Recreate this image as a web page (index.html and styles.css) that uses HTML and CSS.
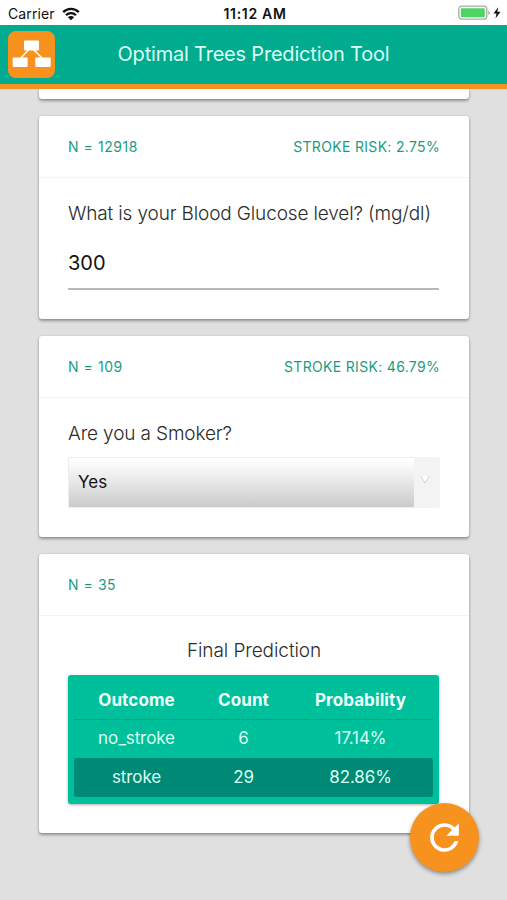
FILE: index.html
```
<!DOCTYPE html>
<html lang="en">
<head>
<meta charset="utf-8">
<title>Optimal Trees Prediction Tool</title>
<link rel="stylesheet" href="styles.css">
</head>
<body>
<div class="statusbar">
  <div class="carrier">
    <span>Carrier</span>
    <svg class="wifi" width="18" height="14" viewBox="0 0 18 14"><g fill="none" stroke="#111" stroke-width="2.3"><path d="M1.2 5.1a11 11 0 0 1 15.6 0"/><path d="M4 8.2a7 7 0 0 1 10 0"/></g><path d="M5.9 10.3a4.4 4.4 0 0 1 6.2 0L9 13.3z" fill="#111"/></svg>
  </div>
  <div class="clock">11:12 AM</div>
  <svg class="battery" width="44" height="16" viewBox="0 0 44 16"><rect x=".8" y="1.2" width="28" height="13" rx="3" fill="#fff" stroke="#aaa" stroke-width="1.3"/><rect x="2.8" y="3.2" width="24" height="9" rx="1" fill="#4cd561"/><path d="M30.3 5.4q1.6.6 1.6 2.3t-1.6 2.3z" fill="#aaa"/><path d="M40.2 2.2l-4.7 6.4h3l-1 4.9 5-6.7h-3.2z" fill="#111"/></svg>
</div>
<header class="header">
  <svg class="logo" width="47" height="47" viewBox="0 0 47 47"><rect width="47" height="47" rx="8" fill="#f7921e"/><path d="M12 28l11-12 12 12" fill="none" stroke="#fff" stroke-width="1.5"/><g fill="#fff"><rect x="16" y="9.5" width="15" height="10" rx="1"/><rect x="4.7" y="26.5" width="15" height="9.5" rx="1"/><rect x="27.3" y="26.5" width="15.4" height="9.5" rx="1"/></g></svg>
  <h1 class="title">Optimal Trees Prediction Tool</h1>
</header>
<main class="cards">
  <section class="card card-tail"></section>
  <section class="card card-glucose">
    <div class="card-head"><span class="count">N = 12918</span><span class="risk">STROKE RISK: 2.75%</span></div>
    <div class="card-body">
      <div class="question">What is your Blood Glucose level? (mg/dl)</div>
      <div class="field">300</div>
    </div>
  </section>
  <section class="card card-smoker">
    <div class="card-head"><span class="count">N = 109</span><span class="risk">STROKE RISK: 46.79%</span></div>
    <div class="card-body">
      <div class="question">Are you a Smoker?</div>
      <div class="select"><div class="select-value">Yes</div><div class="select-arrow"><svg width="10" height="10" viewBox="0 0 10 10"><path d="M1 1.2L5 8l4-6.8" fill="#fff" stroke="#d4d4d4"/></svg></div></div>
    </div>
  </section>
  <section class="card card-result">
    <div class="card-head"><span class="count">N = 35</span></div>
    <div class="card-body">
      <div class="question final">Final Prediction</div>
      <div class="result">
        <div class="row row-head"><span>Outcome</span><span>Count</span><span>Probability</span></div>
        <div class="row"><span>no_stroke</span><span>6</span><span>17.14%</span></div>
        <div class="row row-active"><span>stroke</span><span>29</span><span>82.86%</span></div>
      </div>
    </div>
  </section>
</main>
<div class="fab"><svg width="43" height="43" viewBox="0 0 24 24"><path fill="#fff" d="M17.65 6.35A7.96 7.96 0 0 0 12 4a8 8 0 1 0 7.73 10h-2.08A6 6 0 1 1 12 6c1.66 0 3.14.69 4.22 1.78L13 11h7V4z"/></svg></div>
</body>
</html>
```
FILE: styles.css
```
* { box-sizing: border-box; }
body {
  margin: 0;
  width: 507px;
  height: 900px;
  overflow: hidden;
  background: #e0e0e0;
  font-family: Inter, "Liberation Sans", sans-serif;
  display: flex;
  flex-direction: column;
}
.statusbar {
  height: 25px;
  flex: none;
  background: #fff;
  display: grid;
  grid-template-columns: 1fr auto 1fr;
  align-items: center;
  padding: 2px 5px 0 8px;
  color: #111;
  font-size: 14px;
}
.carrier { display: flex; align-items: center; gap: 7px; letter-spacing: .1px; }
.clock { font-weight: 600; letter-spacing: .7px; }
.battery { justify-self: end; margin-top: -1px; }
.header {
  height: 64px;
  flex: none;
  background: #00ab8e;
  border-bottom: 5px solid #f7921e;
  display: grid;
  grid-template-columns: 47px 1fr 47px;
  align-items: center;
  padding: 0 8px;
  position: relative;
  z-index: 1;
}
.logo { display: block; }
.title {
  margin: 0;
  padding-bottom: 2px;
  text-align: center;
  font-size: 20px;
  line-height: 24px;
  font-weight: 400;
  letter-spacing: -.2px;
  color: #d9fff4;
  white-space: nowrap;
}
.cards {
  padding: 0 38px 0 39px;
  display: flex;
  flex-direction: column;
}
.card {
  background: #fff;
  border-radius: 3px;
  box-shadow: 0 2px 3px rgba(0,0,0,.34), 0 0 2px rgba(0,0,0,.16);
}
.card-tail { height: 10px; border-radius: 0 0 3px 3px; margin-bottom: 17px; }
.card-glucose { height: 203px; margin-bottom: 17px; }
.card-smoker { height: 201px; margin-bottom: 17px; }
.card-result { height: 279px; }
.card-head {
  height: 62px;
  border-bottom: 1px solid #f3f3f3;
  padding: 0 29px 1px;
  display: flex;
  justify-content: space-between;
  align-items: center;
  font-size: 14px;
  color: #1b9c80;
  letter-spacing: .32px;
}
.count { letter-spacing: .55px; }
.card-body { padding: 22px 29px 0; }
.question {
  font-size: 19px;
  line-height: 28px;
  font-weight: 300;
  letter-spacing: -.14px;
  color: #2b2b2b;
  white-space: nowrap;
}
.field {
  margin-top: 12px;
  width: 371px;
  height: 50px;
  border-bottom: 2px solid #b8b8b8;
  font-size: 20px;
  line-height: 46px;
  color: #111;
}
.select { display: flex; height: 51px; margin-top: 9px; width: 372px; }
.select-value {
  flex: 1;
  padding-left: 9px;
  border: solid #eee;
  border-width: 1px 0 1px 1px;
  background: linear-gradient(#fff 5%, #cbcbcb);
  font-size: 17px;
  line-height: 49px;
  color: #111;
}
.select-arrow {
  width: 26px;
  background: #f3f3f3;
  border-radius: 0 3px 3px 0;
  padding: 18px 0 0 6px;
}
.select-arrow svg { display: block; }
.final { text-align: center; letter-spacing: -.08px; }
.card-result .card-body { padding-top: 21px; }
.result {
  margin-top: 10px;
  width: 371px;
  height: 129px;
  background: #00c09b;
  border-radius: 3px;
  box-shadow: 0 1px 3px rgba(0,0,0,.3);
  padding: 6px;
}
.row {
  display: grid;
  grid-template-columns: 125px 89px 145px;
  height: 38px;
  line-height: 37px;
  text-align: center;
  font-size: 17px;
  letter-spacing: -.1px;
  color: #d9fff3;
}
.row-head { height: 39px; line-height: 38px; font-weight: 700; border-bottom: 1px solid #00a785; color: #effffa; letter-spacing: .1px; }
.row-active { height: 39px; line-height: 38px; background: #008975; border-radius: 3px; }
.fab {
  position: absolute;
  left: 410px;
  top: 803px;
  width: 69px;
  height: 69px;
  border-radius: 50%;
  background: #f7921e;
  box-shadow: 0 2px 4px rgba(0,0,0,.4);
  display: flex;
  align-items: center;
  justify-content: center;
  z-index: 2;
}
```
